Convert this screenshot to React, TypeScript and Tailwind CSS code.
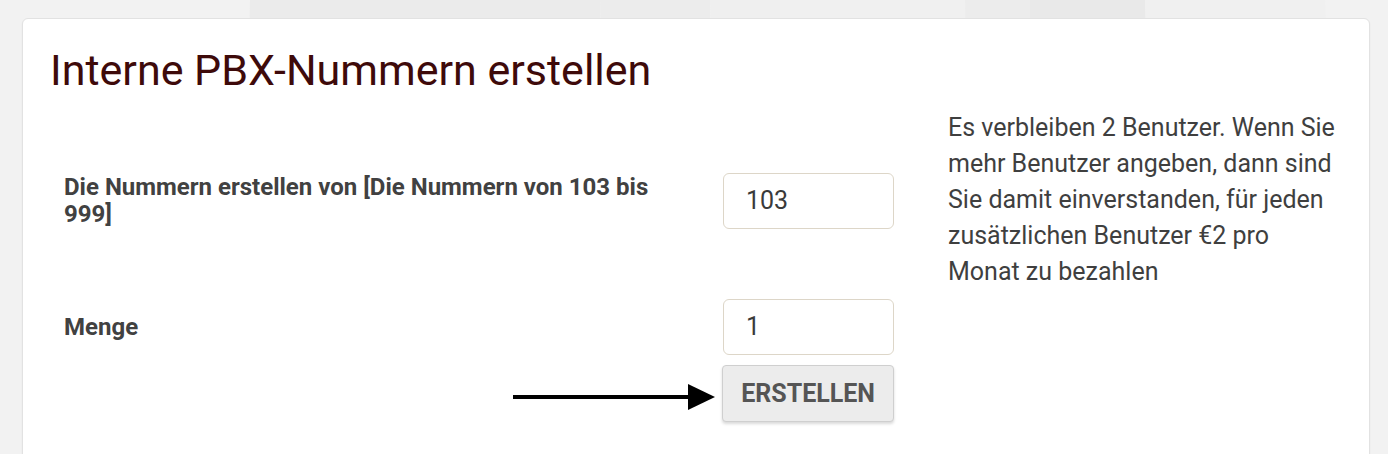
import React from "react";

function Background() {
  return (
    <svg className="absolute inset-0 w-full h-full" viewBox="0 0 1388 454" preserveAspectRatio="none">
      <rect width="1388" height="454" fill="#f2f2f2" />
      <polygon points="250,0 600,0 610,454 240,454" fill="#ebebeb" />
      <polygon points="600,0 710,0 720,454 610,454" fill="#ececec" />
      <polygon points="710,0 780,0 790,454 720,454" fill="#efefef" />
      <polygon points="780,0 965,0 970,454 790,454" fill="#f0f0f0" />
      <polygon points="965,0 1030,0 1030,454 970,454" fill="#ececec" />
      <polygon points="1030,0 1145,0 1160,454 1030,454" fill="#e9e9e9" />
      <polygon points="1145,0 1325,0 1345,454 1160,454" fill="#f0f0f0" />
    </svg>
  );
}

function Arrow() {
  return (
    <svg width="202" height="28" viewBox="0 0 202 28" className="block">
      <rect x="0" y="12" width="180" height="4" fill="#000" />
      <polygon points="175,1 202,14 175,27" fill="#000" />
    </svg>
  );
}

export default function App() {
  return (
    <div className="relative w-[1388px] h-[454px] overflow-hidden" style={{ fontFamily: "Roboto, 'Liberation Sans', sans-serif" }}>
      <Background />
      <div className="relative ml-[22px] mt-[18px] w-[1348px] h-[480px] bg-white rounded-[6px] border border-[#e2e2e2] shadow-[0_1px_2px_rgba(0,0,0,0.06)] pl-[27px] pt-[26px]">
        <h1 className="text-[43px] leading-[50px] text-[#3e0a0a] font-normal">Interne PBX-Nummern erstellen</h1>
        <div className="flex mt-[14px]">
          <div className="flex flex-col w-[844px] pl-[14px] pt-[64px]">
            <div className="flex items-center h-[56px]">
              <div className="w-[659px] pr-[30px] text-[24px] leading-[27px] font-bold text-[#414141]">
                Die Nummern erstellen von [Die Nummern von 103 bis 999]
              </div>
              <div className="w-[171px] h-[56px] border border-[#ddd6c8] rounded-[6px] flex items-center pl-[22px] text-[25px] text-[#3a3a3a]">
                103
              </div>
            </div>
            <div className="flex items-center h-[56px] mt-[70px]">
              <div className="w-[659px] text-[24px] leading-[27px] font-bold text-[#414141]">Menge</div>
              <div className="w-[171px] h-[56px] border border-[#ddd6c8] rounded-[6px] flex items-center pl-[22px] text-[25px] text-[#3a3a3a]">
                1
              </div>
            </div>
            <div className="flex items-center mt-[10px]">
              <div className="w-[659px] flex justify-end pr-[7px] mt-[7px]">
                <Arrow />
              </div>
              <button className="w-[172px] h-[57px] bg-[#ececec] border border-[#cfcfcf] rounded-[4px] shadow-[0_2px_3px_rgba(0,0,0,0.15)] text-[25px] font-bold text-[#555555]">
                ERSTELLEN
              </button>
            </div>
          </div>
          <div className="w-[446px] pl-[54px] mt-[1px] text-[25px] leading-[36px] text-[#3f3f3f]">
            Es verbleiben 2 Benutzer. Wenn Sie mehr Benutzer angeben, dann sind Sie damit einverstanden, für jeden zusätzlichen Benutzer €2 pro Monat zu bezahlen
          </div>
        </div>
      </div>
    </div>
  );
}
